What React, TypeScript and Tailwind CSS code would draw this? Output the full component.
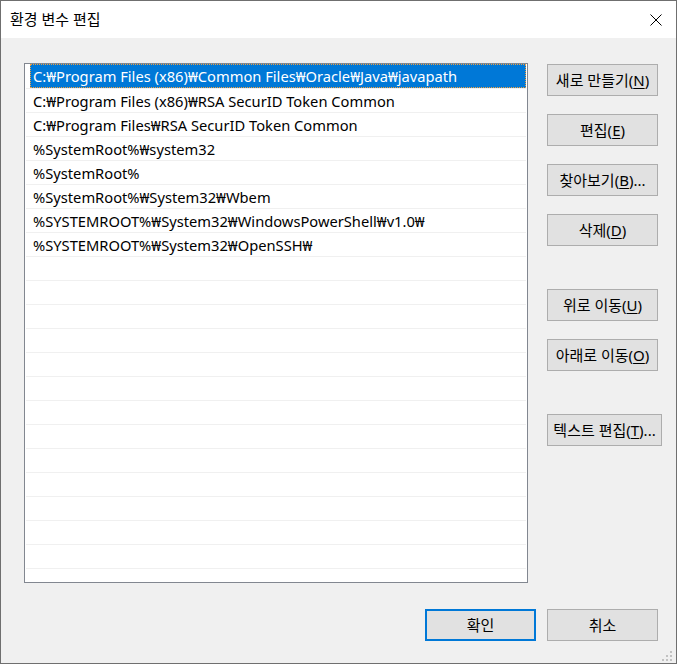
import React from "react";

const ui = "font-['Noto_Sans','Noto_Sans_CJK_KR',sans-serif]";

const paths = [
  "C:₩Program Files (x86)₩Common Files₩Oracle₩Java₩javapath",
  "C:₩Program Files (x86)₩RSA SecurID Token Common",
  "C:₩Program Files₩RSA SecurID Token Common",
  "%SystemRoot%₩system32",
  "%SystemRoot%",
  "%SystemRoot%₩System32₩Wbem",
  "%SYSTEMROOT%₩System32₩WindowsPowerShell₩v1.0₩",
  "%SYSTEMROOT%₩System32₩OpenSSH₩",
];

const rows = [...paths, ...Array(14).fill("")];

const Btn = ({
  label,
  hot,
  tail = "",
  className = "",
}: {
  label: string;
  hot: string;
  tail?: string;
  className?: string;
}) => (
  <button
    className={`h-[32px] bg-[#e1e1e1] border border-[#adadad] text-[15px] text-black leading-none flex items-center justify-center whitespace-nowrap ${className}`}
  >
    {label}(<span className="underline underline-offset-2">{hot}</span>){tail}
  </button>
);

export default function App() {
  return (
    <div className={`w-[677px] h-[664px] border border-[#6f6f6f] flex flex-col relative ${ui}`}>
      <div className="h-[37px] bg-white flex items-center justify-between pl-[9px] pr-[14px]">
        <span className="text-[15px] text-black">환경 변수 편집</span>
        <svg width="12" height="12" viewBox="0 0 12 12" className="mt-[1px]">
          <path d="M0.5 0.5L11.5 11.5M11.5 0.5L0.5 11.5" stroke="#000" strokeWidth="1" />
        </svg>
      </div>

      <div className="flex-1 bg-[#f0f0f0] flex flex-col pt-[25px] pl-[23px]">
        <div className="flex">
          <div className="w-[504px] h-[520px] bg-white border border-[#828790] overflow-hidden">
            {rows.map((p, i) => (
              <div
                key={i}
                className={`h-[24px] mx-[1px] flex items-stretch ${i > 0 ? "border-t border-[#f0f0f0]" : ""}`}
              >
                {i === 0 ? (
                  <div className="ml-[4px] flex-1 bg-[#0078d7] text-white text-[14.7px] pl-[3px] pt-[1px] flex items-center outline outline-1 outline-dotted outline-[#f0a040] -outline-offset-1">
                    {p}
                  </div>
                ) : (
                  <div className="ml-[4px] flex-1 text-black text-[14.7px] pl-[3px] pt-[1px] flex items-center">
                    {p}
                  </div>
                )}
              </div>
            ))}
          </div>

          <div className="ml-[19px] pt-[1px] flex flex-col">
            <Btn label="새로 만들기" hot="N" className="w-[111px]" />
            <Btn label="편집" hot="E" className="w-[111px] mt-[18px]" />
            <Btn label="찾아보기" hot="B" tail="..." className="w-[111px] mt-[18px]" />
            <Btn label="삭제" hot="D" className="w-[111px] mt-[18px]" />
            <Btn label="위로 이동" hot="U" className="w-[111px] mt-[43px]" />
            <Btn label="아래로 이동" hot="O" className="w-[111px] mt-[18px]" />
            <Btn label="텍스트 편집" hot="T" tail="..." className="w-[115px] mt-[43px]" />
          </div>
        </div>

        <div className="flex justify-end gap-[11px] pr-[18px] mt-[26px]">
          <button className="w-[111px] h-[32px] bg-[#e1e1e1] border-2 border-[#0078d7] text-[15px] text-black">
            확인
          </button>
          <button className="w-[111px] h-[32px] bg-[#e1e1e1] border border-[#adadad] text-[15px] text-black">
            취소
          </button>
        </div>
      </div>

      <svg width="12" height="12" viewBox="0 0 12 12" className="absolute right-[3px] bottom-[1px]">
        <rect x="9" y="1" width="2" height="2" fill="#c2c2c2" />
        <rect x="5" y="5" width="2" height="2" fill="#c2c2c2" />
        <rect x="9" y="5" width="2" height="2" fill="#c2c2c2" />
        <rect x="1" y="9" width="2" height="2" fill="#c2c2c2" />
        <rect x="5" y="9" width="2" height="2" fill="#c2c2c2" />
        <rect x="9" y="9" width="2" height="2" fill="#c2c2c2" />
      </svg>
    </div>
  );
}
